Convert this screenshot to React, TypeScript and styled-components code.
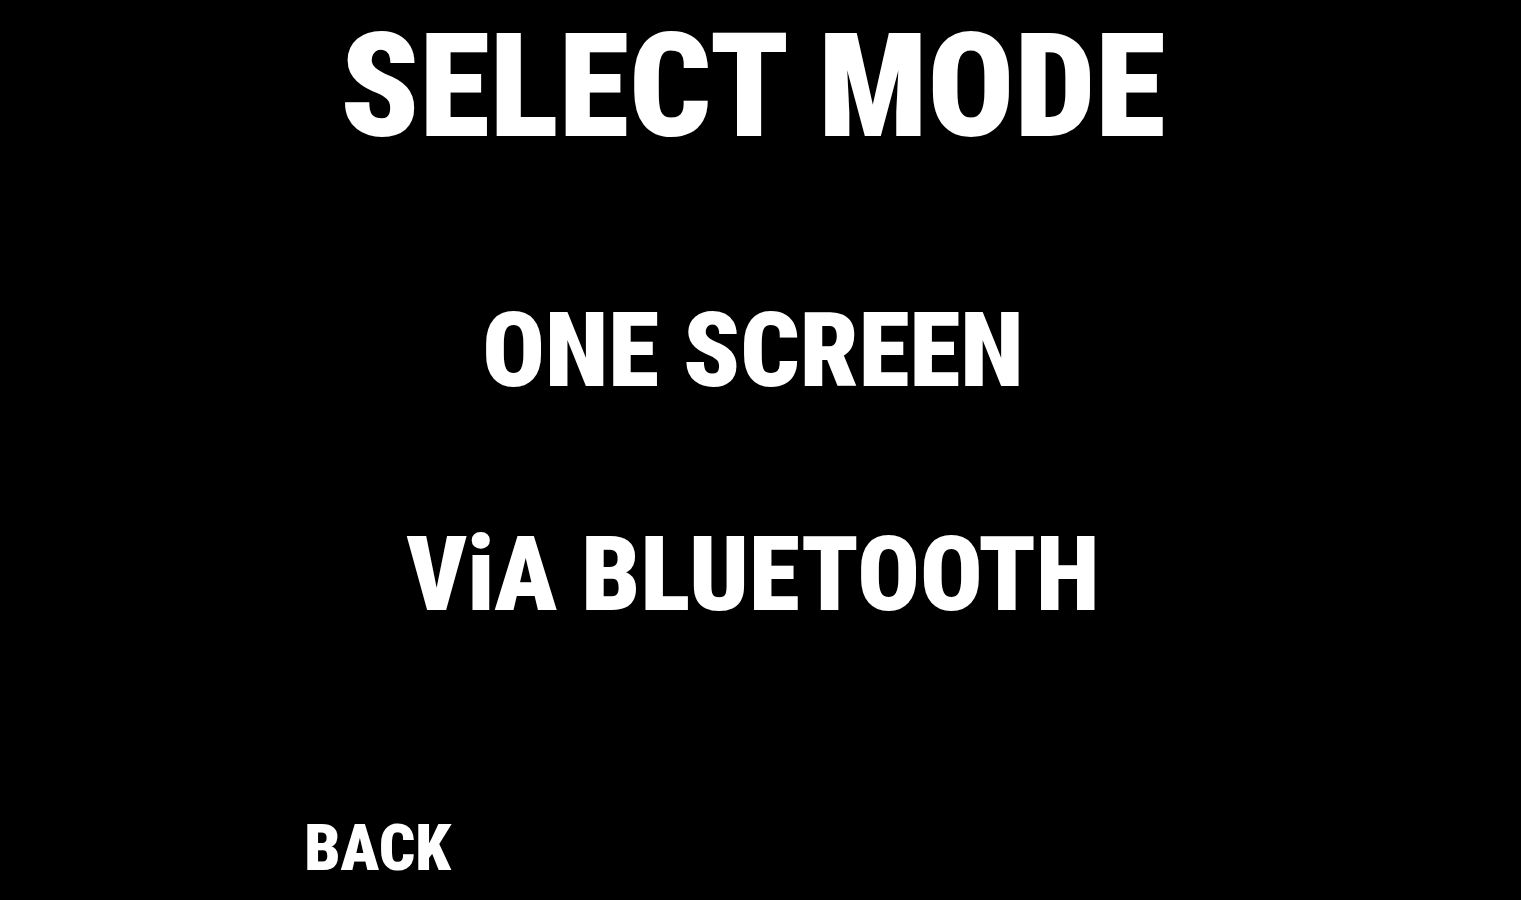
import React from "react";
import styled, { createGlobalStyle } from "styled-components";

const GlobalStyle = createGlobalStyle`
  *, *::before, *::after { box-sizing: border-box; }
  html, body { margin: 0; background: #000; }
`;

const Screen = styled.main`
  display: flex;
  flex-direction: column;
  align-items: center;
  min-height: 100vh;
  padding: 3px 21% 15px 20%;
  background: #000;
  color: #fff;
  font-family: "Roboto Condensed", "Liberation Sans Narrow", sans-serif;
  font-weight: 900;
`;

const Title = styled.h1`
  margin: 0;
  font-size: 144px;
  font-weight: 900;
  line-height: 168px;
  white-space: nowrap;
`;

const Modes = styled.nav`
  display: flex;
  flex-direction: column;
  align-items: center;
  gap: 104px;
  margin-top: 120px;
`;

const MenuButton = styled.button<{ $size: "large" | "small" }>`
  padding: 0;
  border: 0;
  background: none;
  color: inherit;
  font: inherit;
  font-size: ${({ $size }) => ($size === "large" ? 104 : 64)}px;
  line-height: ${({ $size }) => ($size === "large" ? 120 : 72)}px;
  white-space: nowrap;
  cursor: pointer;
`;

const Footer = styled.footer`
  display: flex;
  align-self: stretch;
  margin-top: auto;
`;

export default function App() {
  return (
    <Screen>
      <GlobalStyle />
      <Title>SELECT MODE</Title>
      <Modes aria-label="Game mode">
        <MenuButton type="button" $size="large">ONE SCREEN</MenuButton>
        <MenuButton type="button" $size="large">ViA BLUETOOTH</MenuButton>
      </Modes>
      <Footer>
        <MenuButton type="button" $size="small">BACK</MenuButton>
      </Footer>
    </Screen>
  );
}
